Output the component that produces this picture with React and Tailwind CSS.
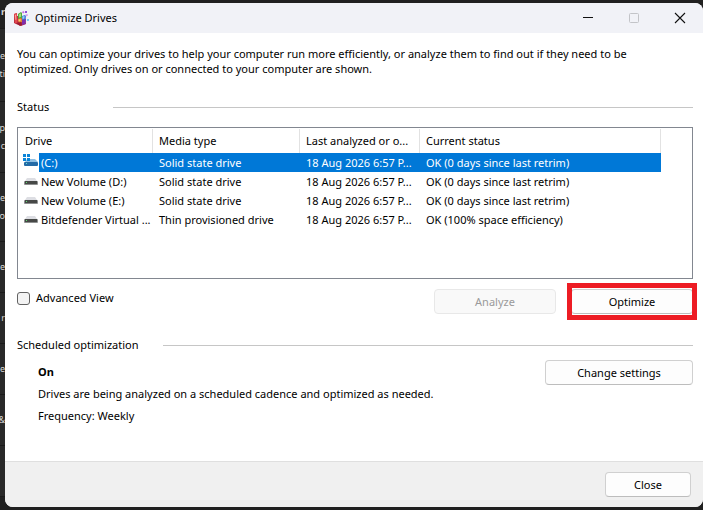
import React from 'react';

const drives = [
  { name: '(C:)', media: 'Solid state drive', last: '18 Aug 2026 6:57 P...', status: 'OK (0 days since last retrim)', system: true, selected: true },
  { name: 'New Volume (D:)', media: 'Solid state drive', last: '18 Aug 2026 6:57 P...', status: 'OK (0 days since last retrim)' },
  { name: 'New Volume (E:)', media: 'Solid state drive', last: '18 Aug 2026 6:57 P...', status: 'OK (0 days since last retrim)' },
  { name: 'Bitdefender Virtual ...', media: 'Thin provisioned drive', last: '18 Aug 2026 6:57 P...', status: 'OK (100% space efficiency)' },
];

// Rows of the settings page that sits behind the dialog
const backdropRows = [
  { lines: ['r'], className: 'h-[29px] pb-1 font-bold' },
  { lines: ['e', 'ti'], className: 'h-[73px] bg-[#292929]' },
  { lines: ['p', 'c'], className: 'h-[71px] bg-[#292929]' },
  { lines: ['e', 'o'], className: 'h-[69px] bg-[#292929]' },
  { lines: ['e'], className: 'h-[51px] bg-[#292929]' },
  { lines: ['r'], className: 'h-[51px] bg-[#292929]' },
  { lines: ['e'], className: 'h-[51px] bg-[#292929]' },
  { lines: ['&'], className: 'h-[51px] bg-[#292929]' },
  { lines: [], className: 'h-[51px] bg-[#292929]' },
];

const DefragIcon = () => (
  <svg className="h-4 w-4 shrink-0" viewBox="0 0 16 16" aria-hidden="true">
    <path d="M1 4l3-1v3l8 0 1 8-5 2-5-2-2-1z" fill="#b8283c" />
    <path d="M1 4l3-1 .5 10-2.500.5z" fill="#e0484f" />
    <path d="M2 5l1-.4.4 5-1 .4z" fill="#f7a59c" />
    <path d="M5 4l3-2 1 1v5l-4 1z" fill="#4fa83d" />
    <path d="M6 4.500l2-1.200v3.500L6 7.500z" fill="#a5dc7d" />
    <path d="M9 6l3-1 1 1-.4 4L9 10z" fill="#3c7fd6" />
    <path d="M9.500 6.500l2-.6-.2 2.600-1.800.4z" fill="#9ccdf5" />
    <path d="M5 9l3-1 1 1v3l-3 1z" fill="#e0892f" />
    <path d="M5.500 9.500l2-.6v2l-2 .6z" fill="#f8d070" />
    <path d="M9 10l4-1-.5 5-3.500 1z" fill="#7d2fae" />
    <path d="M3 13l5-1 1 3-2 1z" fill="#9b1c33" />
    <path d="M9 2l1.500-1 1 1.500-1.500 1z" fill="#c56be6" />
    <path d="M12 1h2v2h-2z" fill="#8e4fd6" />
    <path d="M12.500 4.500l2-.5.5 1.500-2 1z" fill="#d79af0" />
    <path d="M14 9h2v2h-2z" fill="#74cdf2" />
  </svg>
);

const DriveIcon = ({ system }) =>
  system ? (
    <svg className="h-4 w-4 shrink-0" viewBox="0 0 16 16" aria-hidden="true">
      <path d="M4 6h8l3 3H2z" fill="#8fbfe2" />
      <rect x="1" y="9" width="14" height="4" rx="1" fill="#236aa6" />
      <path d="M3 10h1v1H3z" fill="#5fe0d0" />
      <path d="M0 1h3v3H0zM4 1h3v3H4zM0 5h3v3H0zM4 5h3v3H4z" fill="#0a84d8" />
    </svg>
  ) : (
    <svg className="h-4 w-4 shrink-0" viewBox="0 0 16 16" aria-hidden="true">
      <path d="M4 6h8l2 3H2z" fill="#dddee3" />
      <rect x="1" y="9" width="14" height="4" rx="1" fill="#8d8f8f" />
      <path d="M2 9h12v3H2z" fill="#464846" />
      <path d="M3 10h1v1H3z" fill="#5fe070" />
    </svg>
  );

const DialogButton = ({ className = '', children, ...props }) => (
  <button
    type="button"
    className={`h-[25px] rounded border border-[#d0d0d0] border-b-[#bdbdbd] bg-[#fdfdfd] leading-4 disabled:border-[#e8e8e8] disabled:bg-[#f9f9f9] disabled:text-[#9a9a9a] ${className}`}
    {...props}
  >
    {children}
  </button>
);

const SectionTitle = ({ children, gap }) => (
  <div className="flex items-center">
    <h2 className={`leading-4 ${gap}`}>{children}</h2>
    <div className="h-px flex-1 bg-[#c6c6c6]" />
  </div>
);

const Backdrop = () => (
  <aside className="w-[5px] shrink-0 overflow-hidden text-[9px] text-[#d6d6d6]" aria-hidden="true">
    {backdropRows.map((row, idx) => (
      <div key={idx} className={`flex flex-col items-end justify-center border-b border-[#1a1a1a] leading-[18px] ${row.className}`}>
        {row.lines.map((line) => (
          <span key={line}>{line}</span>
        ))}
      </div>
    ))}
  </aside>
);

const TitleBar = () => (
  <header className="flex h-[30px] items-center bg-[#f1f2f7] pl-2">
    <DefragIcon />
    <h1 className="ml-1.5 flex-1">Optimize Drives</h1>
    <button type="button" aria-label="Minimize" className="flex h-full w-[46px] items-center justify-center">
      <svg className="h-3 w-3" viewBox="0 0 12 12"><path d="M1 5.500h10" stroke="#111" /></svg>
    </button>
    <button type="button" aria-label="Maximize" disabled className="flex h-full w-[46px] items-center justify-center">
      <svg className="h-3 w-3" viewBox="0 0 12 12"><rect x="1.500" y="1.500" width="9" height="9" rx="1" fill="none" stroke="#c3c4c8" /></svg>
    </button>
    <button type="button" aria-label="Close window" className="flex h-full w-[46px] items-center justify-center">
      <svg className="h-3 w-3" viewBox="0 0 12 12"><path d="M1 1l10 10M11 1L1 11" stroke="#111" strokeWidth="1.100" /></svg>
    </button>
  </header>
);

const DriveTable = () => (
  <div className="mt-3 h-[152px] overflow-hidden border border-[#828790] pt-px">
    <table className="w-[643px] table-fixed border-separate border-spacing-0 text-left whitespace-nowrap">
      <colgroup>
        <col className="w-[135px]" />
        <col className="w-[147px]" />
        <col className="w-[120px]" />
        <col />
      </colgroup>
      <thead>
        <tr className="h-6">
          {['Drive', 'Media type', 'Last analyzed or o...', 'Current status'].map((title) => (
            <th key={title} className="border-r border-[#e2e2e2] py-0 pr-0 pl-1.5 font-normal first:pl-[7px]">{title}</th>
          ))}
        </tr>
      </thead>
      <tbody>
        {drives.map((drive) => {
          const color = drive.selected ? 'bg-[#0078d7] text-white' : '';
          return (
            <tr key={drive.name} className="h-[19px] leading-[19px]">
              <td className="p-0">
                <div className="flex pl-[5px]">
                  <DriveIcon system={drive.system} />
                  <span className={`h-[19px] flex-1 pl-0.5 ${color}`}>{drive.name}</span>
                </div>
              </td>
              <td className={`py-0 pl-1.5 ${color}`}>{drive.media}</td>
              <td className={`py-0 pr-0 pl-1.5 ${color}`}>{drive.last}</td>
              <td className={`py-0 pl-1.5 ${color}`}>{drive.status}</td>
            </tr>
          );
        })}
      </tbody>
    </table>
  </div>
);

const App = () => {
  return (
    <div className="flex min-h-screen bg-[#202020] font-['Noto_Sans','Open_Sans',sans-serif] text-[11px] text-black">
      <Backdrop />
      <main className="my-[3px] flex min-w-0 flex-1 flex-col overflow-hidden rounded-lg bg-white">
        <TitleBar />
        <div className="flex-1 pt-[13px] pr-2.5 pl-3">
          <p className="pr-8 leading-[15px]">
            You can optimize your drives to help your computer run more efficiently, or analyze them to find out if they need to be
            optimized. Only drives on or connected to your computer are shown.
          </p>

          <div className="mt-[23px]">
            <SectionTitle gap="w-24">Status</SectionTitle>
            <DriveTable />
          </div>

          <div className="mt-2.5 flex items-start">
            <label className="mt-px flex items-center gap-1.5 leading-4">
              <input type="checkbox" className="h-[13px] w-[13px] appearance-none rounded-[3px] border border-[#626262] bg-[#f3f3f3]" />
              Advanced View
            </label>
            <DialogButton disabled className="ml-auto w-[122px]">Analyze</DialogButton>
            <div className="relative ml-[15px]">
              <DialogButton className="w-[122px]">Optimize</DialogButton>
              <div className="pointer-events-none absolute -inset-x-1 -inset-y-1.5 border-5 border-[#ed1c24]" />
            </div>
          </div>

          <div className="mt-[23px]">
            <SectionTitle gap="mr-6">Scheduled optimization</SectionTitle>
            <div className="mt-[7px] flex items-start justify-between">
              <div className="pt-1 pl-[21px] leading-4">
                <p className="font-bold">On</p>
                <p className="mt-1.5">Drives are being analyzed on a scheduled cadence and optimized as needed.</p>
                <p className="mt-1.5">Frequency: Weekly</p>
              </div>
              <DialogButton className="w-[148px]">Change settings</DialogButton>
            </div>
          </div>
        </div>
        <footer className="flex h-[46px] justify-end border-t border-[#dfdfdf] bg-[#f0f0f0] pt-2.5 pr-3">
          <DialogButton className="w-[86px]">Close</DialogButton>
        </footer>
      </main>
    </div>
  );
};

export default App;
